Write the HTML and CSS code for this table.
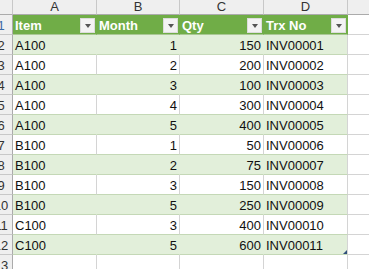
FILE: index.html
```html
<!DOCTYPE html>
<html>
<head>
<meta charset="utf-8">
<link rel="stylesheet" href="styles.css">
</head>
<body>
<div class="sheet">
  <div class="ch corner"></div>
  <div class="ch">A</div>
  <div class="ch">B</div>
  <div class="ch">C</div>
  <div class="ch">D</div>
  <div class="ch last"></div>

  <div class="rh sel"><span>1</span></div>
  <div class="th"><span>Item</span><i class="fb"></i></div>
  <div class="th"><span>Month</span><i class="fb"></i></div>
  <div class="th"><span>Qty</span><i class="fb"></i></div>
  <div class="th"><span>Trx No</span><i class="fb"></i></div>
  <div class="c blank"></div>

  <div class="rh"><span>2</span></div>
  <div class="c g">A100</div><div class="c g n">1</div><div class="c g n">150</div><div class="c g d">INV00001</div><div class="c blank"></div>
  <div class="rh"><span>3</span></div>
  <div class="c w">A100</div><div class="c w n">2</div><div class="c w n">200</div><div class="c w d">INV00002</div><div class="c blank"></div>
  <div class="rh"><span>4</span></div>
  <div class="c g">A100</div><div class="c g n">3</div><div class="c g n">100</div><div class="c g d">INV00003</div><div class="c blank"></div>
  <div class="rh"><span>5</span></div>
  <div class="c w">A100</div><div class="c w n">4</div><div class="c w n">300</div><div class="c w d">INV00004</div><div class="c blank"></div>
  <div class="rh"><span>6</span></div>
  <div class="c g">A100</div><div class="c g n">5</div><div class="c g n">400</div><div class="c g d">INV00005</div><div class="c blank"></div>
  <div class="rh"><span>7</span></div>
  <div class="c w">B100</div><div class="c w n">1</div><div class="c w n">50</div><div class="c w d">INV00006</div><div class="c blank"></div>
  <div class="rh"><span>8</span></div>
  <div class="c g">B100</div><div class="c g n">2</div><div class="c g n">75</div><div class="c g d">INV00007</div><div class="c blank"></div>
  <div class="rh"><span>9</span></div>
  <div class="c w">B100</div><div class="c w n">3</div><div class="c w n">150</div><div class="c w d">INV00008</div><div class="c blank"></div>
  <div class="rh"><span>10</span></div>
  <div class="c g">B100</div><div class="c g n">5</div><div class="c g n">250</div><div class="c g d">INV00009</div><div class="c blank"></div>
  <div class="rh"><span>11</span></div>
  <div class="c w">C100</div><div class="c w n">3</div><div class="c w n">400</div><div class="c w d">INV00010</div><div class="c blank"></div>
  <div class="rh"><span>12</span></div>
  <div class="c g">C100</div><div class="c g n">5</div><div class="c g n">600</div><div class="c g d end">INV00011<i class="handle"></i></div><div class="c blank"></div>
  <div class="rh"><span>13</span></div>
  <div class="c blank"></div><div class="c blank"></div><div class="c blank"></div><div class="c blank"></div><div class="c blank"></div>
</div>
</body>
</html>
```
FILE: styles.css
```css
html, body {
  margin: 0;
  padding: 0;
  background: #ffffff;
  overflow: hidden;
}
.sheet {
  display: grid;
  grid-template-columns: 13px 84px 83px 84px 84px 30px;
  grid-template-rows: 15px;
  grid-auto-rows: 20px;
  font-family: "Liberation Sans", Arial, sans-serif;
  font-size: 13px;
  color: #111;
}
.sheet > div {
  box-sizing: border-box;
  border-right: 1px solid #d4d4d4;
  border-bottom: 1px solid #d4d4d4;
  white-space: nowrap;
  overflow: hidden;
}
.ch {
  background: #efefef;
  color: #333;
  text-align: center;
  line-height: 14px;
  font-size: 13px;
  border-right-color: #c8c8c8 !important;
  border-bottom-color: #ababab !important;
}
.rh {
  background: #efefef;
  color: #333;
  border-right-color: #ababab !important;
  border-bottom-color: #c8c8c8 !important;
  line-height: 20px;
  padding-top: 1px;
}
.rh span {
  display: block;
  width: 26px;
  margin-left: -12px;
  text-align: center;
}
.rh.sel {
  color: #3b6aa5;
}
.th {
  background: #70ad47;
  color: #ffffff;
  font-weight: bold;
  display: flex;
  align-items: center;
  justify-content: space-between;
  padding-left: 2px;
  padding-top: 1px;
  border-right-color: #70ad47 !important;
  border-bottom-color: #a9c894 !important;
}
.fb {
  width: 15px;
  height: 15px;
  box-sizing: border-box;
  background: #f3f3f3;
  border: 1px solid #dcdcdc;
  margin-right: 1px;
  display: flex;
  align-items: center;
  justify-content: center;
}
.fb::after {
  content: "";
  width: 0;
  height: 0;
  border-left: 3.5px solid transparent;
  border-right: 3.5px solid transparent;
  border-top: 4px solid #555;
  margin-top: 1px;
}
.c {
  line-height: 20px;
  padding: 1px 2px 0 2px;
}
.n {
  text-align: right;
}
.g {
  background: #e2efda;
  border-right-color: #e2efda !important;
  border-bottom-color: #c4d8b6 !important;
}
.w {
  background: #ffffff;
  border-bottom-color: #c4d8b6 !important;
}
.d {
  border-right-color: #d4d4d4 !important;
}
.end {
  position: relative;
}
.handle {
  position: absolute;
  right: 0;
  bottom: 0;
  width: 0;
  height: 0;
  border-left: 4px solid transparent;
  border-bottom: 4px solid #2f4f7a;
}
```
